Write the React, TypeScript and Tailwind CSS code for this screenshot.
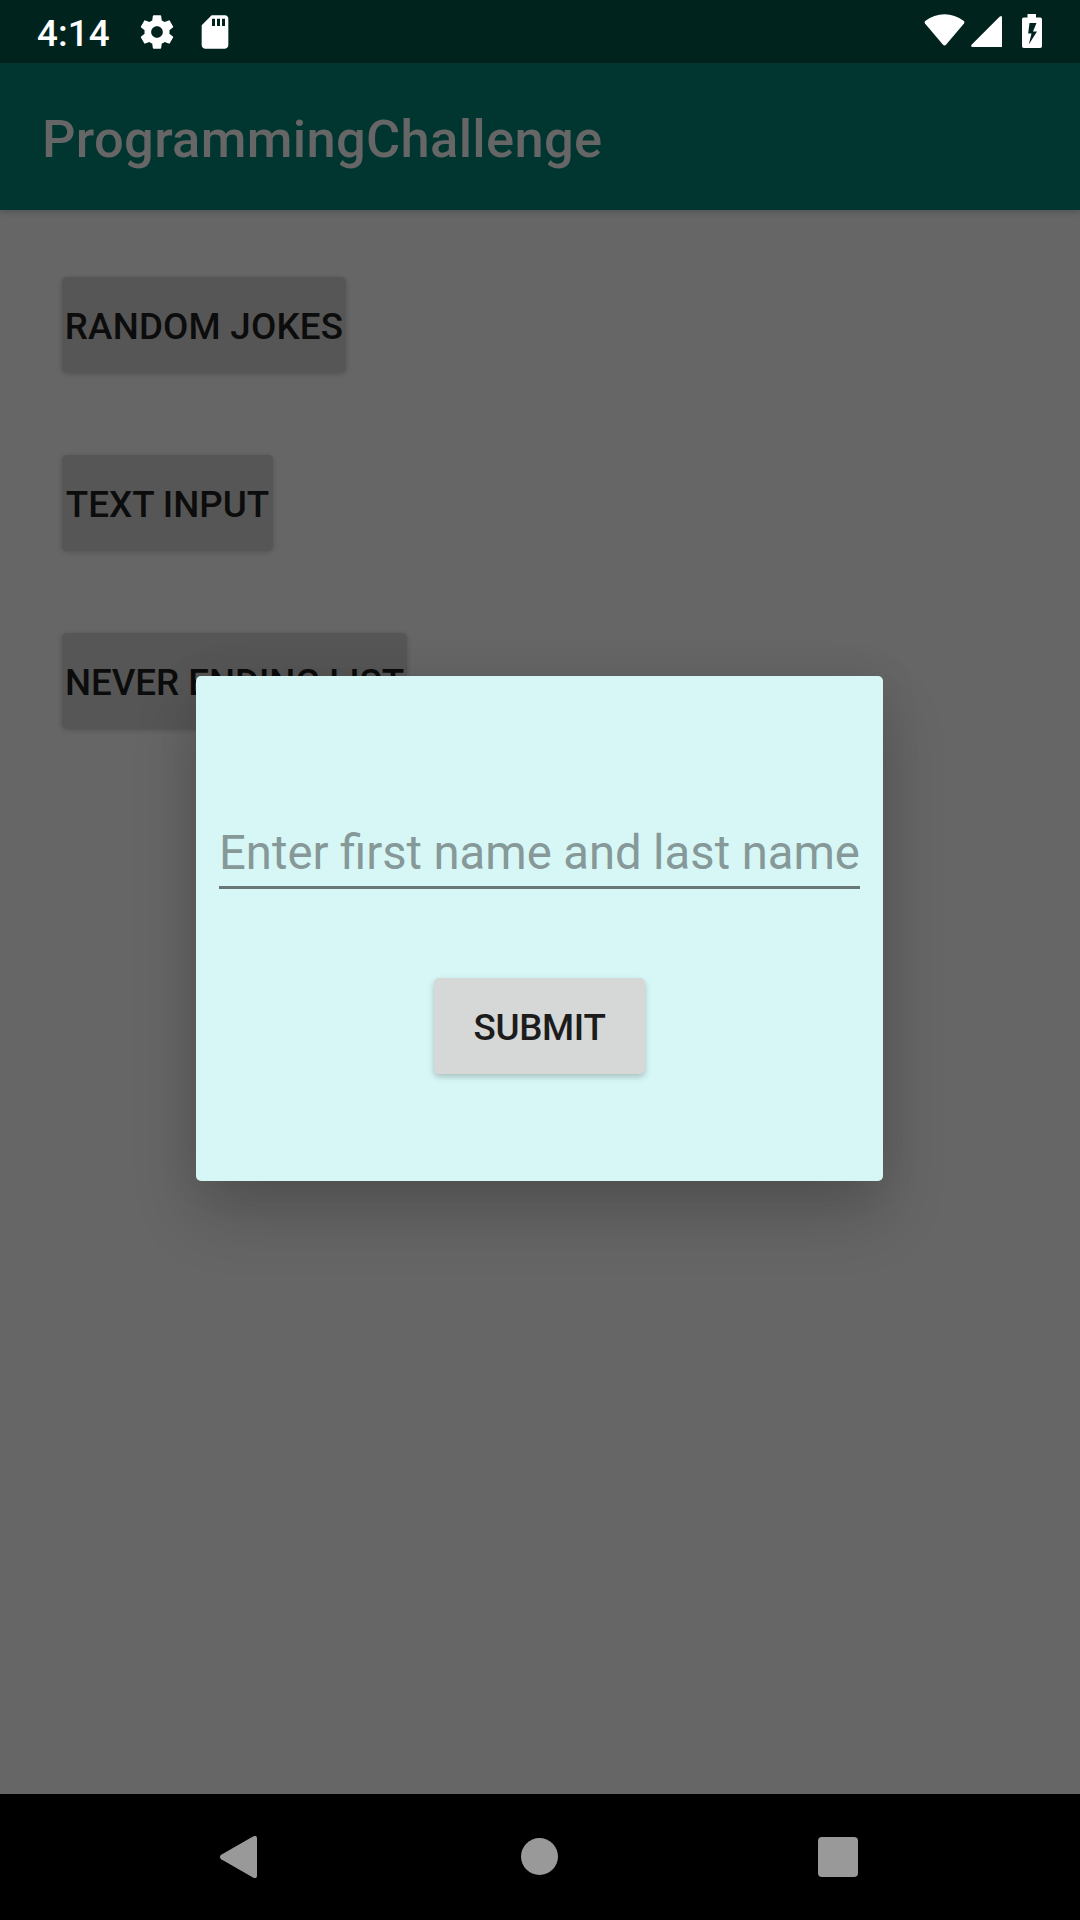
import React from "react";

const FONT = "font-['Roboto',sans-serif]";

function StatusBar() {
  return (
    <div className="flex h-[63px] items-center justify-between bg-[#00231e] text-white">
      <div className="flex items-center pl-[37px]">
        <span className="w-[100px] pt-[4px] text-[36.75px] leading-[41px] font-medium tracking-[0.1px]">4:14</span>
        <svg className="h-[40px] w-[40px]" viewBox="0 0 24 24" fill="currentColor">
          <path d="M19.43 12.98c.04-.32.07-.64.07-.98s-.03-.66-.07-.98l2.11-1.65c.19-.15.24-.42.12-.64l-2-3.46c-.12-.22-.39-.3-.61-.22l-2.49 1c-.52-.4-1.08-.73-1.69-.98l-.38-2.65C14.46 2.18 14.25 2 14 2h-4c-.25 0-.46.18-.49.42l-.38 2.65c-.61.25-1.17.59-1.69.98l-2.49-1c-.23-.09-.49 0-.61.22l-2 3.46c-.13.22-.07.49.12.64l2.11 1.65c-.04.32-.07.65-.07.98s.03.66.07.98l-2.11 1.65c-.19.15-.24.42-.12.64l2 3.46c.12.22.39.3.61.22l2.49-1c.52.4 1.08.73 1.69.98l.38 2.65c.03.24.24.42.49.42h4c.25 0 .46-.18.49-.42l.38-2.65c.61-.25 1.17-.59 1.69-.98l2.49 1c.23.09.49 0 .61-.22l2-3.46c.12-.22.07-.49-.12-.64l-2.11-1.65zM12 15.5c-1.93 0-3.5-1.57-3.5-3.5s1.57-3.5 3.5-3.5 3.5 1.57 3.5 3.5-1.57 3.5-3.5 3.5z" />
        </svg>
        <svg className="ml-[18px] h-[40px] w-[40px]" viewBox="0 0 24 24" fill="currentColor">
          <path d="M18 2h-8L4.02 8 4 20c0 1.100.9 2 2 2h12c1.100 0 2-.9 2-2V4c0-1.100-.9-2-2-2zm-6 6.400h-1.800V4H12v4.400zm3 0h-1.800V4H15v4.400zm3 0h-1.800V4H18v4.400z" />
        </svg>
      </div>
      <div className="flex h-full items-start pr-[38px]">
        <svg className="mt-[14px] h-[32px] w-[41px]" viewBox="0 0 41 32" fill="currentColor">
          <path d="M1 9.500Q0 8 1.500 6.800Q10 .2 20.500.2T39.500 6.800Q41 8 40 9.500L22 30.700Q20.500 32.300 19 30.700Z" />
        </svg>
        <svg className="ml-[6px] mt-[15px] h-[32px] w-[32px]" viewBox="0 0 32 32" fill="currentColor">
          <path d="M28.800 1.500Q31 0 31 2.500V32H2Q-1 32 .8 29.500Z" />
        </svg>
        <svg className="ml-[19px] mt-[14px] h-[34px] w-[20px]" viewBox="0 0 20 34" fill="currentColor">
          <path fillRule="evenodd" d="M5.500 0h8.500v3.500h4.200Q20 3.500 20 5.300v27q0 1.700-1.800 1.700H1.800Q0 34 0 32.300v-27Q0 3.500 1.800 3.500h3.700ZM7.500 9 6.200 19.500h3.300L6.800 30.500 15 17.500H11L14.500 9Z" />
        </svg>
      </div>
    </div>
  );
}

function MenuButton({ label, className }: { label: string; className: string }) {
  return (
    <button
      className={`flex h-[96px] items-center justify-center rounded-[5px] bg-[#565656] pt-[3px] text-[36.75px] leading-[44px] font-medium whitespace-nowrap text-[#0c0c0c] shadow-[0_1px_5px_rgba(0,0,0,0.2)] ${className}`}
    >
      {label}
    </button>
  );
}

function NameDialog() {
  return (
    <div className="absolute top-[676px] left-[196px] flex h-[505px] w-[687px] flex-col items-center rounded-[5px] bg-[#d7f7f6] shadow-[0_34px_64px_rgba(0,0,0,0.19),0_0px_44px_rgba(0,0,0,0.07)]">
      <div className="mt-[148px] h-[65px] w-[641px] border-b-[3px] border-[#697877] pt-[1px] text-[47.25px] leading-[56px] [word-spacing:-0.25px] whitespace-nowrap text-[#869998]">
        Enter first name and last name
      </div>
      <button className="mt-[89px] flex h-[96px] w-[211px] items-center justify-center rounded-[5px] bg-[#d6d7d7] pt-[3px] text-[36.75px] leading-[44px] font-medium tracking-[-0.3px] text-[#1c1c1c] shadow-[0_3px_6px_rgba(0,0,0,0.22)]">
        SUBMIT
      </button>
    </div>
  );
}

function NavigationBar() {
  return (
    <div className="flex h-[126px] items-start bg-black text-[#999999]">
      <svg className="mt-[42px] ml-[219px] h-[42px] w-[38px]" viewBox="0 0 38 42" fill="currentColor">
        <path d="M34 .6Q38-1.400 38 2.500v37Q38 43.400 34 41.400L2.200 23.200Q-.4 21 2.200 18.800Z" />
      </svg>
      <div className="mt-[44px] ml-[264px] h-[37px] w-[37px] rounded-full bg-[#999999]" />
      <div className="mt-[43px] ml-[260px] h-[40px] w-[40px] rounded-[4px] bg-[#999999]" />
    </div>
  );
}

export default function App() {
  return (
    <div className={`relative flex h-[1920px] w-[1080px] flex-col overflow-hidden bg-[#666666] ${FONT}`}>
      <StatusBar />
      <header className="flex h-[147px] items-center bg-[#003530] pt-[4px] pl-[42px] text-[52.5px] leading-[62px] font-medium tracking-[0.3px] text-[#666666] shadow-[0_2px_6px_rgba(0,0,0,0.2)]">
        ProgrammingChallenge
      </header>
      <main className="flex flex-1 flex-col items-start gap-[82px] pt-[67px] pl-[62px]">
        <MenuButton label="RANDOM JOKES" className="w-[284px] tracking-[0.2px]" />
        <MenuButton label="TEXT INPUT" className="w-[211px]" />
        <MenuButton label="NEVER ENDING LIST" className="w-[345px] tracking-[-0.05px]" />
      </main>
      <NavigationBar />
      <NameDialog />
    </div>
  );
}
